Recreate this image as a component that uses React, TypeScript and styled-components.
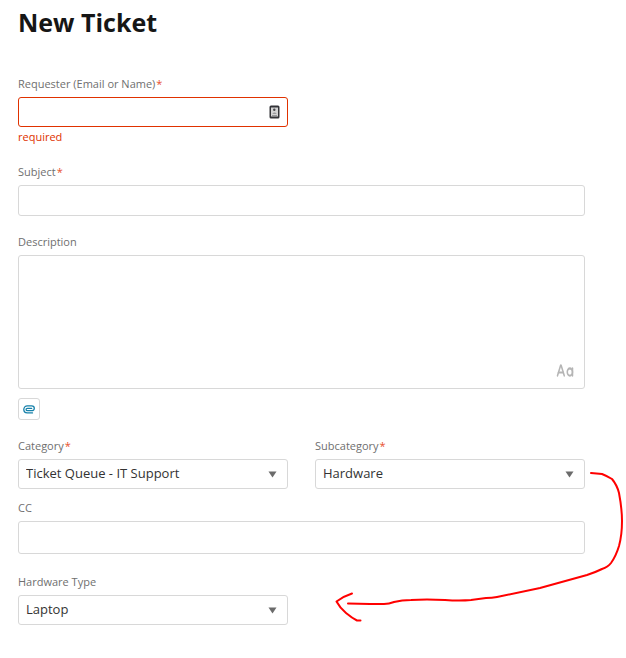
import React, { useId } from "react";
import styled, { createGlobalStyle } from "styled-components";
import { CaseSensitive } from "lucide-react";

const GlobalStyle = createGlobalStyle`
  * { box-sizing: border-box; }
  body {
    margin: 0;
    background: #fff;
    color: #333;
    font-family: "Open Sans", "Noto Sans", sans-serif;
  }
`;

const red = "#e03200";

const Page = styled.main`
  padding: 4px 41px 32px 18px;
`;

const Title = styled.h1`
  margin: 0 0 36px;
  font-size: 25px;
  line-height: 36px;
  font-weight: 700;
  color: #161616;
`;

const Form = styled.form`
  display: flex;
  flex-direction: column;
  gap: 18px;
`;

const Row = styled.div`
  display: grid;
  grid-template-columns: 1fr 1fr;
  column-gap: 27px;
`;

const Field = styled.div`
  display: flex;
  flex-direction: column;
  min-width: 0;
`;

const Label = styled.label`
  margin-bottom: 5px;
  font-size: 11px;
  line-height: 16px;
  color: #6f6f6f;
`;

const Star = styled.span`
  margin-left: 1px;
  color: #e8502c;
`;

const ControlWrap = styled.div`
  position: relative;
  display: flex;
`;

const Input = styled.input<{ $invalid?: boolean; $height?: number }>`
  width: 100%;
  height: ${(p) => p.$height ?? 31}px;
  padding: 0 8px;
  border: 1px solid ${(p) => (p.$invalid ? red : "#d8d8d8")};
  border-radius: 3px;
  background: #fff;
  font: 13px "Open Sans", sans-serif;
  color: #333;
  outline: none;
`;

const TextArea = styled.textarea`
  display: block;
  width: 100%;
  height: 134px;
  padding: 8px;
  border: 1px solid #d8d8d8;
  border-radius: 3px;
  resize: none;
  font: 13px "Open Sans", sans-serif;
  color: #333;
  outline: none;
`;

const Select = styled.select`
  appearance: none;
  width: 100%;
  height: 30px;
  padding: 0 28px 2px 7px;
  border: 1px solid #d8d8d8;
  border-radius: 3px;
  background: #fff;
  font: 13px "Open Sans", sans-serif;
  color: #333;
  outline: none;
`;

const Caret = styled.svg`
  position: absolute;
  right: 11px;
  top: 12px;
  pointer-events: none;
`;

const ErrorText = styled.p`
  margin: 2px 0 1px;
  font-size: 11px;
  line-height: 16px;
  color: ${red};
`;

const ContactButton = styled.button`
  position: absolute;
  right: 8px;
  top: 8px;
  display: flex;
  padding: 0;
  border: 0;
  background: none;
`;

const FormatButton = styled.button`
  position: absolute;
  right: 11px;
  bottom: 5px;
  display: flex;
  padding: 0;
  border: 0;
  background: none;
  color: #b5b5b5;
`;

const AttachButton = styled.button`
  display: flex;
  align-items: center;
  justify-content: center;
  width: 22px;
  height: 22px;
  margin-top: 9px;
  padding: 0;
  border: 1px solid #d8d8d8;
  border-radius: 3px;
  background: #fff;
`;

const Details = styled.section`
  position: relative;
  display: flex;
  flex-direction: column;
  gap: 11px;
`;

const LastRow = styled(Row)`
  margin-top: 9px;
`;

const Annotation = styled.svg`
  position: absolute;
  top: 0;
  right: -41px;
  pointer-events: none;
`;

function FieldLabel({ id, text, required }: { id: string; text: string; required?: boolean }) {
  return (
    <Label htmlFor={id}>
      {text}
      {required && <Star>*</Star>}
    </Label>
  );
}

function SelectField({ label, value, required }: { label: string; value: string; required?: boolean }) {
  const id = useId();
  return (
    <Field>
      <FieldLabel id={id} text={label} required={required} />
      <ControlWrap>
        <Select id={id} defaultValue={value}>
          <option>{value}</option>
        </Select>
        <Caret width="9" height="7" viewBox="0 0 9 7" aria-hidden="true">
          <path d="M.5.5h8L4.5 6.5z" fill="#6b6b6b" />
        </Caret>
      </ControlWrap>
    </Field>
  );
}

function ContactIcon() {
  return (
    <svg width="11" height="14" viewBox="0 0 11 14" aria-hidden="true">
      <rect x="0.5" y="0.5" width="10" height="13" rx="1.5" fill="#343438" />
      <rect x="2" y="2.5" width="7" height="9" fill="#d4d4d4" />
      <circle cx="5.3" cy="4.8" r="1.2" fill="#46464a" />
      <path d="M3.500 9c.4-2 3.600-2 4 0z" fill="#9b9b9d" />
      <path d="M3 10.500h5" stroke="#98989b" />
    </svg>
  );
}

function ClipIcon() {
  return (
    <svg width="12" height="9" viewBox="0 0 12 9" fill="none" stroke="#1681aa" strokeLinecap="round" aria-hidden="true">
      <path
        strokeWidth="1.3"
        d="M9.5 7.9H4.2C2 7.9.8 6.4.8 4.6.8 2.4 2.3.9 4.4.9h4.2c1.7 0 2.7.9 2.7 2.3S10.3 5.7 8.8 5.7H4.5c-.9 0-1.4-.5-1.4-1.2s.5-1.2 1.4-1.2h4.2"
      />
    </svg>
  );
}

export default function App() {
  return (
    <>
      <GlobalStyle />
      <Page>
        <Title>New Ticket</Title>
        <Form onSubmit={(e) => e.preventDefault()}>
          <Row>
            <Field>
              <FieldLabel id="requester" text="Requester (Email or Name)" required />
              <ControlWrap>
                <Input id="requester" $invalid $height={30} aria-invalid="true" aria-describedby="requester-error" />
                <ContactButton type="button" aria-label="Choose contact">
                  <ContactIcon />
                </ContactButton>
              </ControlWrap>
              <ErrorText id="requester-error">required</ErrorText>
            </Field>
          </Row>
          <Field>
            <FieldLabel id="subject" text="Subject" required />
            <Input id="subject" />
          </Field>
          <Field>
            <FieldLabel id="description" text="Description" />
            <ControlWrap>
              <TextArea id="description" />
              <FormatButton type="button" aria-label="Text formatting">
                <CaseSensitive width={18} height={25} strokeWidth={2} preserveAspectRatio="none" />
              </FormatButton>
            </ControlWrap>
            <AttachButton type="button" aria-label="Attach file">
              <ClipIcon />
            </AttachButton>
          </Field>
          <Details>
            <Row>
              <SelectField label="Category" value="Ticket Queue - IT Support" required />
              <SelectField label="Subcategory" value="Hardware" required />
            </Row>
            <Field>
              <FieldLabel id="cc" text="CC" />
              <Input id="cc" $height={33} />
            </Field>
            <LastRow>
              <SelectField label="Hardware Type" value="Laptop" />
            </LastRow>
            <Annotation
              width="296"
              height="190"
              viewBox="330 438 296 190"
              fill="none"
              stroke="#ff0000"
              strokeWidth="2"
              strokeLinecap="round"
              strokeLinejoin="round"
              aria-hidden="true"
            >
              <path d="M591 473L602 474Q607 476 612 479Q617 485 619 493Q622 509 622 521Q622 535 619 546Q616 556 611 563Q608 567 602 569Q596 572 587 575L540 588L497 597Q492 598 486 598L471 600Q460 601 445 600Q426 599 411 600Q402 600 394 602Q389 604 384 604H370L348 603.500" />
              <path d="M352 593.500Q344 596 336.500 601.500Q340 608 346 613Q352 618 357 620.500H360.500" />
            </Annotation>
          </Details>
        </Form>
      </Page>
    </>
  );
}
